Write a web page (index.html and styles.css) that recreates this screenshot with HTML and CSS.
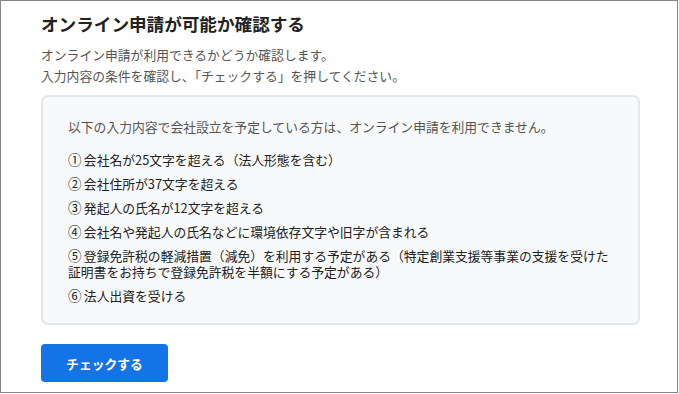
FILE: index.html
```html
<!DOCTYPE html>
<html lang="ja">
<head>
<meta charset="utf-8">
<link rel="stylesheet" href="styles.css">
</head>
<body>
<div class="frame">
  <h1 class="title">オンライン申請が可能か確認する</h1>
  <p class="lead">オンライン申請が利用できるかどうか確認します。<br>入力内容の条件を確認し、「チェックする」を押してください。</p>
  <div class="notice">
    <p class="intro">以下の入力内容で会社設立を予定している方は、オンライン申請を利用できません。</p>
    <ul class="conditions">
      <li><span class="num">①</span> 会社名が25文字を超える（法人形態を含む）</li>
      <li><span class="num">②</span> 会社住所が37文字を超える</li>
      <li><span class="num">③</span> 発起人の氏名が12文字を超える</li>
      <li><span class="num">④</span> 会社名や発起人の氏名などに環境依存文字や旧字が含まれる</li>
      <li><span class="num">⑤</span> 登録免許税の軽減措置（減免）を利用する予定がある（特定創業支援等事業の支援を受けた証明書をお持ちで登録免許税を半額にする予定がある）</li>
      <li><span class="num">⑥</span> 法人出資を受ける</li>
    </ul>
  </div>
  <button class="check-btn" type="button">チェックする</button>
</div>
</body>
</html>
```

FILE: styles.css
```css
html, body {
  margin: 0;
  padding: 0;
  background: #ffffff;
}
body {
  font-family: "Noto Sans CJK JP", "Noto Sans", sans-serif;
}
.frame {
  width: 678px;
  height: 393px;
  box-sizing: border-box;
  border: 1px solid #858585;
  padding: 9px 0 0 40px;
}
.title {
  margin: 0;
  font-size: 17.6px;
  line-height: 28px;
  font-weight: 700;
  color: #222222;
}
.lead {
  margin: 6px 0 0;
  font-size: 12.8px;
  line-height: 21px;
  color: #555555;
}
.notice {
  margin-top: 9px;
  width: 599px;
  box-sizing: border-box;
  border: 2px solid #e3e8ef;
  border-radius: 7px;
  background: #f7f9fb;
  padding: 19px 26px 19px 25px;
}
.intro {
  margin: 0;
  font-size: 12.8px;
  line-height: 21px;
  color: #555555;
}
.conditions {
  list-style: none;
  margin: 15px 0 0;
  padding: 0;
  display: flex;
  flex-direction: column;
  gap: 8px;
}
.conditions li {
  font-size: 12.8px;
  line-height: 16px;
  color: #222222;
}
.num {
  display: inline-block;
  width: 13px;
  line-height: 1;
  text-align: left;
  font-size: 13.5px;
}
.check-btn {
  margin-top: 19px;
  width: 127px;
  height: 38px;
  border: none;
  border-radius: 4px;
  background: #1473e6;
  color: #ffffff;
  font-family: "Noto Sans CJK JP", "Noto Sans", sans-serif;
  font-size: 12.8px;
  font-weight: 700;
  padding: 0;
}
```
